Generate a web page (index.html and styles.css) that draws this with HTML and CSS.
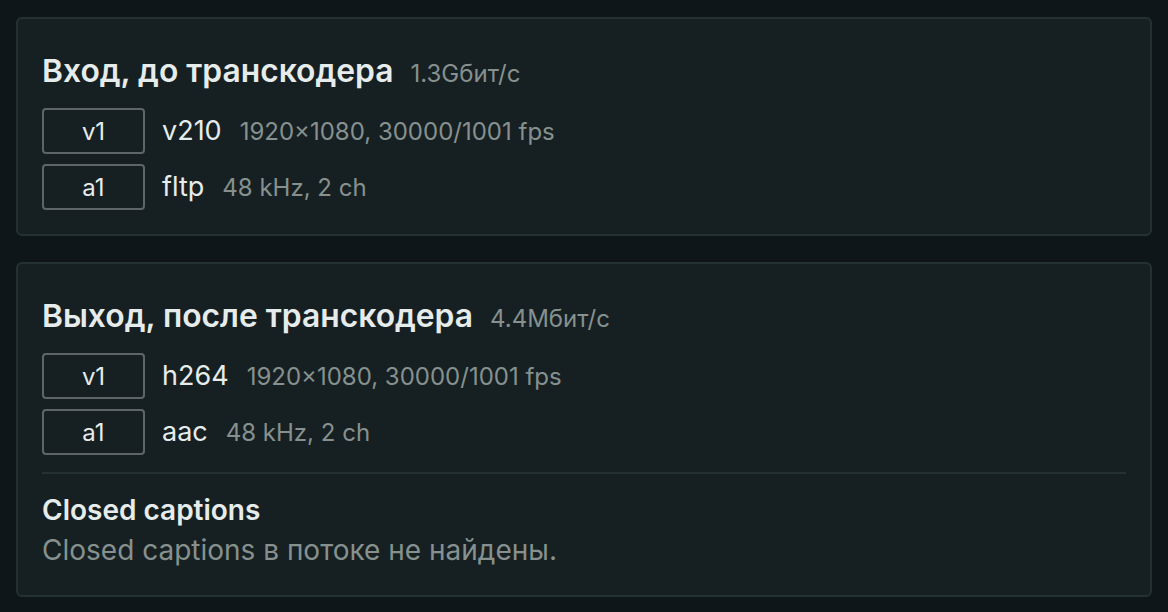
FILE: index.html
```html
<!DOCTYPE html>
<html lang="ru">
<head>
    <meta charset="UTF-8">
    <meta name="viewport" content="width=device-width, initial-scale=1.0">
    <title>Потоки транскодера</title>
    <link rel="stylesheet" href="styles.css">
</head>
<body>
    <div class="streams">
        <section class="card">
            <h2 class="card-title">Вход, до транскодера <span class="bitrate">1.3Gбит/с</span></h2>
            <div class="track">
                <span class="track-id">v1</span>
                <span class="codec">v210</span>
                <span class="params">1920×1080, 30000/1001 fps</span>
            </div>
            <div class="track">
                <span class="track-id">a1</span>
                <span class="codec">fltp</span>
                <span class="params">48 kHz, 2 ch</span>
            </div>
        </section>

        <section class="card">
            <h2 class="card-title">Выход, после транскодера <span class="bitrate">4.4Мбит/с</span></h2>
            <div class="track">
                <span class="track-id">v1</span>
                <span class="codec">h264</span>
                <span class="params">1920×1080, 30000/1001 fps</span>
            </div>
            <div class="track">
                <span class="track-id">a1</span>
                <span class="codec">aac</span>
                <span class="params">48 kHz, 2 ch</span>
            </div>

            <div class="captions">
                <h3>Closed captions</h3>
                <p>Closed captions в потоке не найдены.</p>
            </div>
        </section>
    </div>
</body>
</html>
```

FILE: styles.css
```css
* {
    margin: 0;
    padding: 0;
    box-sizing: border-box;
}

body {
    background: #0f1619;
    color: #e6eceb;
    font-family: 'Inter', 'Noto Sans', sans-serif;
    min-height: 100vh;
    padding: 17px 16px;
}

.streams {
    display: flex;
    flex-direction: column;
    gap: 26px;
}

.card {
    background: #162022;
    border: 2px solid #243133;
    border-radius: 6px;
    padding: 34px 24px 24px;
}

.card-title {
    display: flex;
    align-items: baseline;
    gap: 17px;
    font-size: 31.8px;
    font-weight: 600;
    line-height: 36px;
    margin-bottom: 19px;
}

.bitrate {
    font-size: 24px;
    font-weight: 400;
    line-height: 1;
    color: #86918f;
}

.track {
    display: flex;
    align-items: baseline;
    margin-bottom: 10px;
}

.track:last-of-type {
    margin-bottom: 0;
}

.track-id {
    display: flex;
    align-items: center;
    justify-content: center;
    width: 103px;
    height: 46px;
    border: 2px solid #5e6566;
    border-radius: 4px;
    font-size: 24px;
    margin-right: 17px;
}

.codec {
    font-size: 27px;
    margin-right: 18px;
}

.params {
    font-size: 24px;
    color: #86918f;
}

.captions {
    border-top: 2px solid #243133;
    margin-top: 17px;
    padding-top: 18px;
    padding-bottom: 3px;
}

.captions h3 {
    font-size: 28px;
    font-weight: 600;
    line-height: 36px;
    margin-bottom: 4px;
}

.captions p {
    font-size: 28px;
    line-height: 36px;
    color: #86918f;
}
```
